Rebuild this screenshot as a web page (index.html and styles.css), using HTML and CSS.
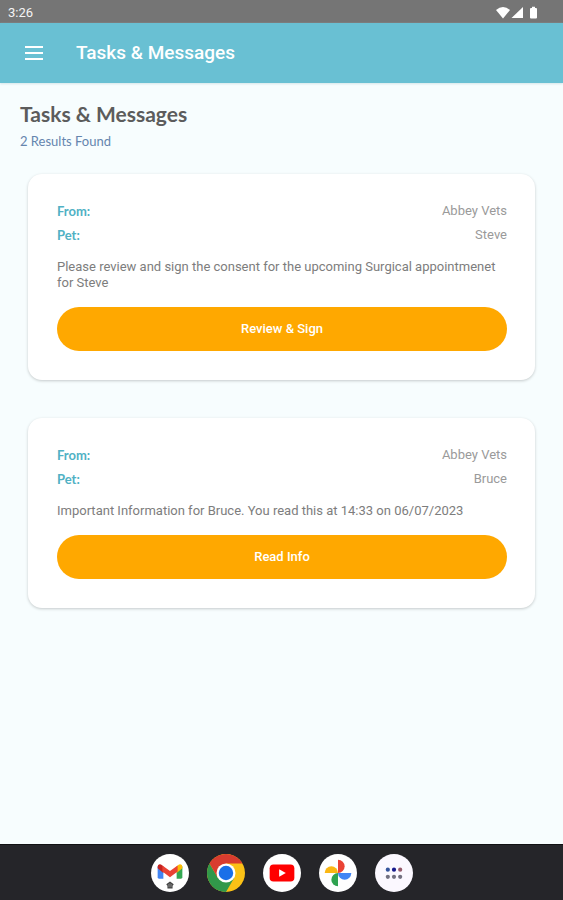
FILE: index.html
```html
<!DOCTYPE html>
<html lang="en">
<head>
<meta charset="utf-8">
<meta name="viewport" content="width=device-width, initial-scale=1">
<title>Tasks &amp; Messages</title>
<link rel="stylesheet" href="styles.css">
</head>
<body>
<div class="status-bar">
  <span>3:26</span>
  <svg class="status-icons" viewBox="0 0 42 14" aria-hidden="true">
    <path d="M0 4Q7-2 14 4L7 12.500Z"/>
    <path d="M27 1V12H15.500Z"/>
    <path d="M35 2h1V.8h3V2h1q1 0 1 1v8.500q0 1-1 1h-5q-1 0-1-1V3q0-1 1-1Z"/>
  </svg>
</div>
<header class="app-bar">
  <button class="menu-button" type="button" aria-label="Open menu">
    <svg viewBox="0 0 18 14" aria-hidden="true"><path d="M0 1h18M0 7h18M0 13h18"/></svg>
  </button>
  <span class="app-title">Tasks &amp; Messages</span>
</header>
<main class="content">
  <h1>Tasks &amp; Messages</h1>
  <p class="results">2 Results Found</p>
  <div class="cards">
    <article class="card">
      <dl>
        <div class="row"><dt>From:</dt><dd>Abbey Vets</dd></div>
        <div class="row"><dt>Pet:</dt><dd>Steve</dd></div>
      </dl>
      <p class="message">Please review and sign the consent for the upcoming Surgical appointmenet for Steve</p>
      <button class="action" type="button">Review &amp; Sign</button>
    </article>
    <article class="card">
      <dl>
        <div class="row"><dt>From:</dt><dd>Abbey Vets</dd></div>
        <div class="row"><dt>Pet:</dt><dd>Bruce</dd></div>
      </dl>
      <p class="message">Important Information for Bruce. You read this at 14:33 on 06/07/2023</p>
      <button class="action" type="button">Read Info</button>
    </article>
  </div>
</main>
<nav class="dock" aria-label="Apps">
  <button type="button" aria-label="Gmail">
    <svg viewBox="0 0 40 40" aria-hidden="true">
      <circle cx="20" cy="20" r="20" fill="#fff"/>
      <path fill="#4285f4" d="M7 13l6 4v9H8.500Q7 26 7 24.500Z"/>
      <path fill="#34a853" d="M33 13l-6 4v9h4.500q1.500 0 1.500-1.500Z"/>
      <path fill="#fbbc04" d="M27 13l2.500-2Q33 10 33 13.500V15l-6 5Z"/>
      <path fill="#c5221f" d="M13 13l-2.500-2Q7 10 7 13.500V15l6 5Z"/>
      <path fill="#ea4335" d="M12 12l8 6 8-6v6.500l-8 6-8-6Z"/>
      <path fill="none" stroke="#444" stroke-width="1.400" d="M16.500 32.500L20 29.800l3.500 2.700M18 32v3.500h4V32"/>
      <path fill="#666" d="M18 32l2-1.500 2 1.500v3h-4Z"/>
    </svg>
  </button>
  <button type="button" aria-label="Chrome">
    <svg viewBox="0 0 40 40" aria-hidden="true">
      <circle cx="20" cy="20" r="20" fill="#fbc116"/>
      <path fill="#31984a" d="M2.680 10A20 20 0 0 0 20 40L28.660 25 20 20 11.340 25Z"/>
      <path fill="#d93c2f" d="M2.680 10A20 20 0 0 1 37.320 10H20V20L11.340 25Z"/>
      <circle cx="20" cy="20" r="10" fill="#fff"/>
      <circle cx="20" cy="20" r="7.600" fill="#1a6fe8"/>
    </svg>
  </button>
  <button type="button" aria-label="YouTube">
    <svg viewBox="0 0 40 40" aria-hidden="true">
      <circle cx="20" cy="20" r="20" fill="#fff"/>
      <rect x="7" y="11" width="26" height="18" rx="4" fill="#f00"/>
      <path fill="#fff" d="M17 16v8l7-4Z"/>
    </svg>
  </button>
  <button type="button" aria-label="Photos">
    <svg viewBox="0 0 40 40" aria-hidden="true">
      <circle cx="20" cy="20" r="20" fill="#fff"/>
      <path fill="#ea4335" d="M20 20V6a7 7 0 0 1 0 14Z"/>
      <path fill="#4285f4" d="M20 20h14a7 7 0 0 1-14 0Z"/>
      <path fill="#2fa350" d="M20 20v14a7 7 0 0 1 0-14Z"/>
      <path fill="#fbb713" d="M20 20H6a7 7 0 0 1 14 0Z"/>
    </svg>
  </button>
  <button type="button" aria-label="All apps">
    <svg viewBox="0 0 40 40" aria-hidden="true">
      <circle cx="20" cy="20" r="20" fill="#fbf8ff"/>
      <g fill="#727080"><circle cx="13.500" cy="24" r="2.200"/><circle cx="20" cy="24" r="2.200"/><circle cx="26.500" cy="24" r="2.200"/></g>
      <circle cx="13.500" cy="16.500" r="2.200" fill="#34549c"/><circle cx="20" cy="16.500" r="2.200" fill="#171a8c"/><circle cx="26.500" cy="16.500" r="2.200" fill="#965b6c"/>
    </svg>
  </button>
</nav>
</body>
</html>
```
FILE: styles.css
```css
* {
  box-sizing: border-box;
}

body {
  margin: 0;
  min-height: 100vh;
  display: flex;
  flex-direction: column;
  background: #f7fdfe;
  color: #7d7d7d;
  font-family: Roboto, sans-serif;
  font-size: 13px;
  line-height: 16px;
}

h1, p, dl, dd {
  margin: 0;
}

button {
  padding: 0;
  border: 0;
  font: inherit;
  cursor: pointer;
}

svg {
  display: block;
}

.status-bar {
  display: flex;
  align-items: center;
  justify-content: space-between;
  height: 23px;
  padding: 2px 25px 0 8px;
  background: #757575;
  color: #f4f4f4;
}

.status-icons {
  width: 42px;
  height: 14px;
  fill: #fff;
}

.app-bar {
  display: flex;
  align-items: center;
  gap: 33px;
  height: 60px;
  padding: 0 25px;
  background: #69c0d3;
  color: #fff;
  box-shadow: 0 1px 2px #d5e6ea;
}

.menu-button {
  background: none;
}

.menu-button svg {
  width: 18px;
  height: 14px;
  stroke: #fff;
  stroke-width: 2;
}

.app-title {
  font-size: 19px;
  font-weight: 500;
  line-height: 26px;
}

.content {
  flex: 1;
  padding: 19px 20px 38px;
}

h1 {
  color: #5c5c5c;
  font-family: Lato, sans-serif;
  font-size: 21px;
  font-weight: 700;
  line-height: 24px;
}

.results {
  margin-top: 7px;
  color: #6585ae;
  font-family: Lato, sans-serif;
}

.cards {
  display: grid;
  gap: 38px;
  padding: 25px 8px 0;
}

.card {
  padding: 25px 28px 29px 29px;
  border-radius: 14px;
  background: #fff;
  box-shadow: 0 1px 3px #c4cacb;
}

.row {
  display: flex;
  justify-content: space-between;
  line-height: 24px;
}

dt {
  color: #50b1c4;
  font-family: Lato, sans-serif;
  font-weight: 700;
}

dd {
  color: #9a9a9a;
}

.message {
  margin: 12px 0 16px;
}

.action {
  display: block;
  width: 100%;
  height: 44px;
  border-radius: 22px;
  background: #ffa800;
  color: #fff;
  font-weight: 500;
}

.dock {
  display: flex;
  align-items: center;
  justify-content: center;
  gap: 18px;
  height: 56px;
  background: #252529;
  border-top: 1px solid #111113;
}

.dock button {
  border-radius: 50%;
  background: none;
}

.dock svg {
  width: 38px;
  height: 38px;
}
```
